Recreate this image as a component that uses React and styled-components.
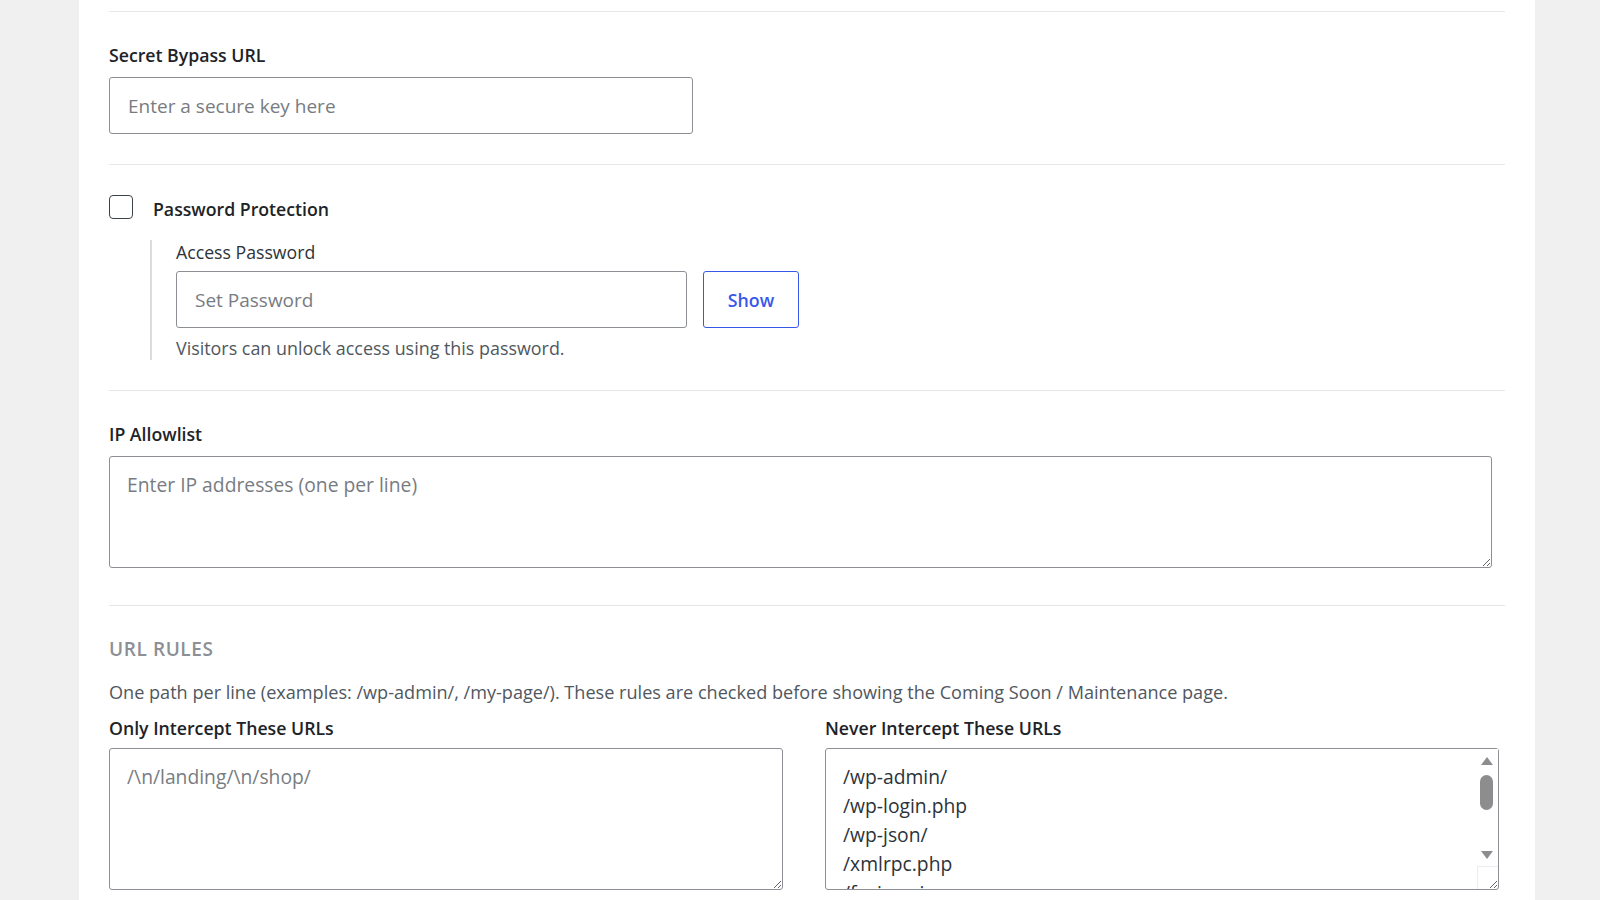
import React from 'react';
import styled, { createGlobalStyle } from 'styled-components';

const GlobalStyle = createGlobalStyle`
  body {
    margin: 0;
    background: #f0f0f1;
    font-family: "Open Sans", "Noto Sans", sans-serif;
    color: #1d2327;
  }
`;

const Page = styled.div`
  height: 900px;
  overflow: hidden;
  padding-left: 79px;
`;

const Card = styled.div`
  box-sizing: border-box;
  width: 1456px;
  min-height: 900px;
  background: #fff;
  padding: 11px 30px 0;
`;

const Section = styled.section`
  border-top: 1px solid #e6e7e9;
  padding: ${(p) => p.$pad};
`;

const Label = styled.label`
  display: block;
  font-size: 17.7px;
  line-height: 24px;
  font-weight: 600;
  color: #1d2327;
  margin-bottom: ${(p) => p.$gap || '10px'};
`;

const SubLabel = styled.label`
  display: block;
  font-size: 17.7px;
  line-height: 24px;
  color: #2c3338;
  margin-bottom: 7px;
`;

const Input = styled.input`
  box-sizing: border-box;
  display: block;
  width: ${(p) => p.$width};
  height: 57px;
  padding: 0 18px;
  border: 1px solid #8c8f94;
  border-radius: 3px;
  font-family: inherit;
  font-size: 19px;
  color: #2c3338;
  background: #fff;
  outline: none;

  &::placeholder {
    color: #787c82;
  }
`;

const TextArea = styled.textarea`
  box-sizing: border-box;
  display: block;
  width: ${(p) => p.$width};
  height: ${(p) => p.$height};
  margin: 0;
  padding: 13px 17px 12px;
  border: 1px solid #8c8f94;
  border-radius: 3px;
  font-family: inherit;
  font-size: 19.3px;
  line-height: 29px;
  color: #2c3338;
  background: #fff;
  resize: vertical;
  overflow: hidden;
  outline: none;

  &::placeholder {
    color: #787c82;
  }
`;

const FieldBox = styled.div`
  position: relative;
`;

/* drawn scrollbar for the list textarea, lies over its right edge */
const ScrollBar = styled.div`
  position: absolute;
  top: 1px;
  right: 1px;
  box-sizing: border-box;
  width: 20px;
  padding-right: 3px;
  display: flex;
  flex-direction: column;
  align-items: center;
  background: #fff;
  pointer-events: none;
`;

const Arrow = styled.span`
  display: flex;
  align-items: center;
  justify-content: center;
  height: ${(p) => p.$h};

  &::before {
    content: '';
    width: 0;
    height: 0;
    border-left: 6.5px solid transparent;
    border-right: 6.5px solid transparent;
    ${(p) => (p.$down ? 'border-top' : 'border-bottom')}: 8px solid #8d8d8d;
  }
`;

const Track = styled.span`
  display: block;
  height: 70px;
`;

const Thumb = styled.span`
  display: block;
  width: 13px;
  height: 35px;
  margin-top: 2px;
  border-radius: 7px;
  background: #8d8d8d;
`;

const Corner = styled.span`
  position: absolute;
  right: 1px;
  bottom: 1px;
  width: 20px;
  height: 22px;
  border-top: 1px solid #ececec;
  border-left: 1px solid #ececec;
  pointer-events: none;
`;

const CheckRow = styled.div`
  display: flex;
  align-items: center;
  gap: 20px;
`;

const Checkbox = styled.input.attrs({ type: 'checkbox' })`
  appearance: none;
  box-sizing: border-box;
  width: 24px;
  height: 24px;
  margin: 0;
  border: 1.5px solid #3c434a;
  border-radius: 4px;
  background: #fff;
`;

const CheckTitle = styled.span`
  font-size: 17.7px;
  line-height: 24px;
  font-weight: 600;
  margin-top: 5px;
`;

const Nested = styled.div`
  margin: 19px 0 0 41px;
  padding-left: 24px;
  border-left: 2px solid #dcdcde;
`;

const InlineRow = styled.div`
  display: flex;
  gap: 16px;
`;

const OutlineButton = styled.button`
  box-sizing: border-box;
  width: 96px;
  height: 57px;
  border: 1px solid #3858e9;
  border-radius: 3px;
  background: #fff;
  color: #3858e9;
  font-family: inherit;
  font-size: 17.8px;
  font-weight: 600;
`;

const Help = styled.p`
  margin: 8px 0 0;
  font-size: 17.9px;
  line-height: 24px;
  color: #50575e;
`;

const Heading = styled.h3`
  margin: 0 0 19px;
  font-size: 19px;
  line-height: 24px;
  font-weight: 600;
  letter-spacing: 0.6px;
  text-transform: uppercase;
  color: #8c8f94;
`;

const Description = styled.p`
  margin: 0 0 12px;
  font-size: 18.1px;
  line-height: 24px;
  color: #50575e;
`;

const Columns = styled.div`
  display: grid;
  grid-template-columns: repeat(2, 674px);
  column-gap: 42px;
`;

const neverList = [
  '/wp-admin/',
  '/wp-login.php',
  '/wp-json/',
  '/xmlrpc.php',
  '/favicon.ico',
  '/robots.txt',
  '/sitemap.xml',
  '/wp-cron.php',
  '/wp-content/',
  '/wp-includes/',
  '/feed/',
].join('\n');

const App = () => {
  return (
    <>
      <GlobalStyle />
      <Page>
        <Card>
          <Section $pad="31px 0 30px">
            <Label>Secret Bypass URL</Label>
            <Input $width="584px" placeholder="Enter a secure key here" />
          </Section>

          <Section $pad="27px 0 30px">
            <CheckRow>
              <Checkbox />
              <CheckTitle>Password Protection</CheckTitle>
            </CheckRow>
            <Nested>
              <SubLabel>Access Password</SubLabel>
              <InlineRow>
                <Input $width="511px" type="text" placeholder="Set Password" />
                <OutlineButton>Show</OutlineButton>
              </InlineRow>
              <Help>Visitors can unlock access using this password.</Help>
            </Nested>
          </Section>

          <Section $pad="31px 0 37px">
            <Label>IP Allowlist</Label>
            <TextArea
              $width="1383px"
              $height="112px"
              placeholder="Enter IP addresses (one per line)"
            />
          </Section>

          <Section $pad="31px 0 0">
            <Heading>URL Rules</Heading>
            <Description>
              One path per line (examples: /wp-admin/, /my-page/). These rules are checked before
              showing the Coming Soon / Maintenance page.
            </Description>
            <Columns>
              <div>
                <Label $gap="8px">Only Intercept These URLs</Label>
                <TextArea $width="674px" $height="142px" placeholder="/\n/landing/\n/shop/" />
              </div>
              <div>
                <Label $gap="8px">Never Intercept These URLs</Label>
                <FieldBox>
                  <TextArea $width="674px" $height="142px" defaultValue={neverList} />
                  <ScrollBar aria-hidden="true">
                    <Arrow $h="24px" />
                    <Track>
                      <Thumb />
                    </Track>
                    <Arrow $h="23px" $down />
                  </ScrollBar>
                  <Corner aria-hidden="true" />
                </FieldBox>
              </div>
            </Columns>
          </Section>
        </Card>
      </Page>
    </>
  );
};

export default App;
